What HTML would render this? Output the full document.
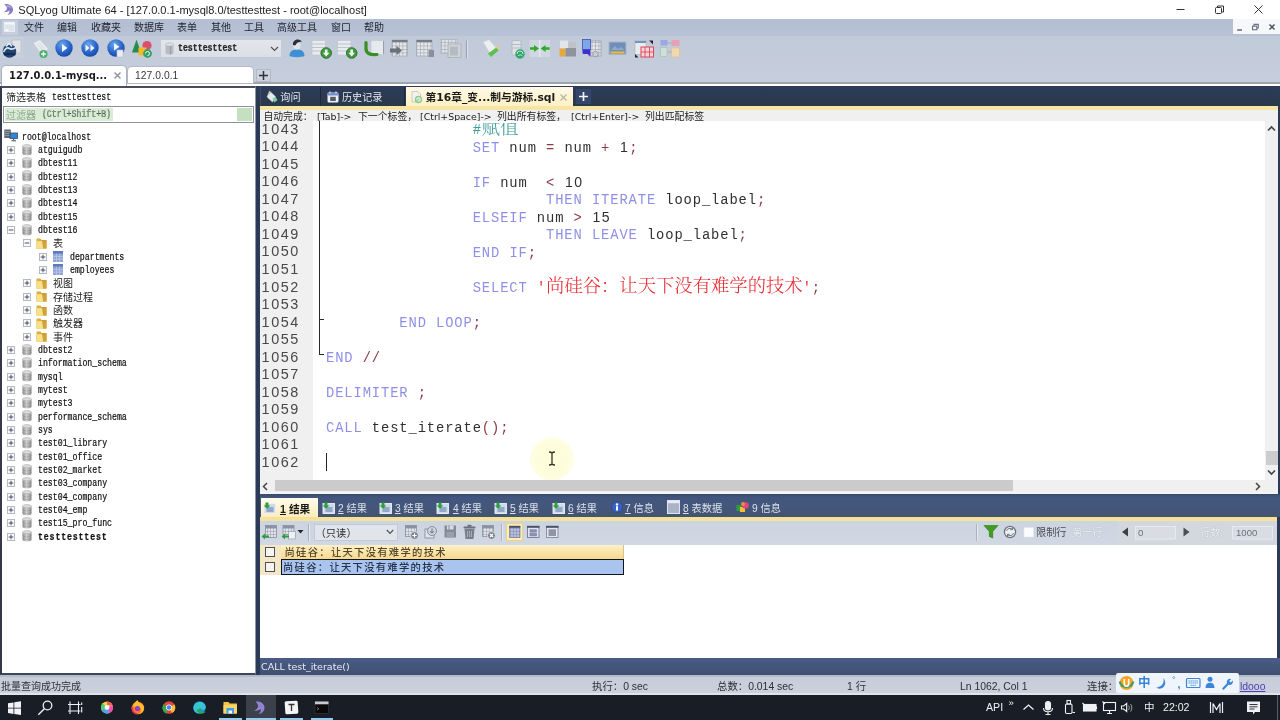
<!DOCTYPE html>
<html lang="zh-CN">
<head>
<meta charset="utf-8">
<title>SQLyog Ultimate 64 - [127.0.0.1-mysql8.0/testtesttest - root@localhost]</title>
<style>
*{box-sizing:border-box;margin:0;padding:0}
html,body{width:1280px;height:720px;overflow:hidden;background:#fff}
body{position:relative;will-change:transform;font-family:"Liberation Sans","Noto Sans CJK SC",sans-serif;font-size:10px;color:#1a1a1a}
.a{position:absolute}
.t{position:absolute;white-space:pre;line-height:1}
svg{position:absolute;overflow:visible}
/* window chrome */
#titlebar{left:0;top:0;width:1280px;height:20px;background:#fff}
#title{left:18.3px;top:2.6px;font-size:11.05px;color:#222;line-height:14px}
#menubar{left:0;top:19px;width:1280px;height:17px;background:linear-gradient(#b3bed2,#b7c2d5)}
.mi{top:22px;font-size:10px;line-height:12px;color:#1d222c}
#toolbar{left:0;top:36px;width:1280px;height:47px;background:linear-gradient(#c1cad9,#c6cedc)}
#tbline1{left:0;top:82px;width:1280px;height:2px;background:#9ea4ad}
#tbline2{left:0;top:84px;width:1280px;height:2px;background:#fff}
.ctab{background:#fff;border-radius:4px 4px 0 0}
.vd{font-family:"DejaVu Sans","Noto Sans CJK SC",sans-serif}
/* left panel */
#left{left:0;top:86px;width:256px;height:589px;background:#fff;border-left:2px solid #34394a;border-top:2px solid #4a4e57;border-bottom:2px solid #3f465a;border-right:1px solid #8e97a8}
.tr{position:absolute;white-space:pre;line-height:12px;height:12px;font-family:"Liberation Mono",monospace;font-size:10px;color:#111;-webkit-text-stroke:.22px #111;transform-origin:0 50%;transform:scaleX(.822)}
.tc{position:absolute;white-space:pre;line-height:12px;height:12px;font-family:"Noto Sans CJK SC",sans-serif;font-size:10px;color:#1c1c1c}
/* right panel */
#navy{left:256px;top:86px;width:1024px;height:589px;background:#2b3a57}
#edtabs{left:256px;top:86px;width:1024px;height:20px;background:linear-gradient(#2d3b5b,#2a3949)}
#hintline{left:260px;top:106px;width:1018px;height:4px;background:#f7e6a3}
#hint{left:260px;top:109px;width:1018px;height:12px;background:#f0f0f0}
#editor{left:260px;top:121px;width:1018px;height:359px;background:#fff}
#gutter{left:260px;top:121px;width:53px;height:359px;background:#f0f0f0}
.ln{position:absolute;left:261.6px;white-space:pre;font-family:"Liberation Sans",sans-serif;font-size:14.4px;letter-spacing:1.55px;line-height:18px;height:18px;color:#484848}
.cl{position:absolute;left:326px;white-space:pre;font-family:"Liberation Mono","Noto Serif CJK SC",monospace;font-size:13.8px;letter-spacing:.888px;line-height:18px;height:18px;color:#303030;tab-size:8;-moz-tab-size:8}
.cl b{font-weight:normal;color:#8f8fe8}
.cl i{font-style:normal;color:#8c3c44}
.cl em{font-style:normal;font-family:"Liberation Sans",sans-serif;font-size:14px;letter-spacing:1.38px;padding-left:.7px;line-height:0}
.cl u{text-decoration:none;color:#3f9c9c}
.cl s{text-decoration:none;color:#e8262c}
.cl .z{font-family:"Noto Serif CJK SC","Noto Sans CJK SC",serif;font-size:18.34px;font-weight:300;letter-spacing:0;line-height:0}
</style>
</head>
<body>
<div class="a" id="titlebar"></div>
<svg style="left:2px;top:3px" width="13" height="13" viewBox="0 0 13 13"><path d="M2.2 1.2 C6 0.6 10.6 2.2 11 6 C11.3 9 9 11.6 5.4 12 C7.2 10.6 7.8 9 7.4 7.6 C6 8.6 3.8 9.4 1.4 9.2 C3.4 8.2 4.8 6.8 5 5.2 C4.6 3.6 3.6 2.2 2.2 1.2 Z" fill="#8a78c8"/><path d="M4.4 2.2 C7 2.2 9.4 3.4 10 5.6 C8.6 4.4 6.6 3.8 5.2 4 Z" fill="#b9aee2"/></svg>
<div class="t" id="title">SQLyog Ultimate 64 - [127.0.0.1-mysql8.0/testtesttest - root@localhost]</div>
<svg style="left:1170px;top:0" width="110" height="20" viewBox="0 0 110 20"><g stroke="#333" stroke-width="1" fill="none"><path d="M6.5 9.5h8"/><rect x="45.500" y="7.500" width="6" height="6" rx="1"/><path d="M47.5 7.500v-1.500h6v6h-1.500"/><path d="M84.500 5.500l8 8M92.500 5.500l-8 8"/></g></svg>
<div class="a" id="menubar"></div>
<svg style="left:2px;top:20px" width="16" height="15" viewBox="0 0 16 15"><rect x="0" y="0" width="16" height="15" fill="#c6cddb"/><rect x="2.500" y="2.500" width="10" height="9" fill="#dfe4ec" stroke="#e9edf3"/><path d="M2.500 3.500h10" stroke="#f4f6fa" stroke-width="2"/><rect x="3.500" y="9" width="3" height="2" fill="#f7f8fb"/></svg>
<div class="t mi" style="left:24px">文件</div>
<div class="t mi" style="left:57px">编辑</div>
<div class="t mi" style="left:91px">收藏夹</div>
<div class="t mi" style="left:134px">数据库</div>
<div class="t mi" style="left:177px">表单</div>
<div class="t mi" style="left:211px">其他</div>
<div class="t mi" style="left:244px">工具</div>
<div class="t mi" style="left:277px">高级工具</div>
<div class="t mi" style="left:331px">窗口</div>
<div class="t mi" style="left:364px">帮助</div>
<div class="a" style="left:1232.5px;top:19px;width:48px;height:14.5px;background:#f5f7fa"></div>
<svg style="left:1233px;top:19px" width="47" height="15" viewBox="0 0 47 15"><g stroke="#4a5160" stroke-width="1.300" fill="none"><path d="M4.200 11h4.800"/><rect x="19.500" y="7.200" width="4.300" height="3.500" stroke="#6a7080" stroke-width="1.100"/><path d="M21 7.200v-1.800h4.300v3.600h-1.500" stroke="#6a7080" stroke-width="1.100"/><path d="M36.500 5.500l5 5M41.500 5.500l-5 5" stroke-width="1.500"/></g></svg>
<div class="a" id="toolbar"></div>
<div class="a" id="tbline1"></div><div class="a" id="tbline2"></div>
<svg style="left:0;top:36px" width="700" height="28" viewBox="0 36 700 28"><defs><radialGradient id="bl" cx=".4" cy=".3" r=".8"><stop offset="0" stop-color="#6aa8ec"/><stop offset=".55" stop-color="#2a66cc"/><stop offset="1" stop-color="#183f9c"/></radialGradient><linearGradient id="gr" x1="0" x2="0" y1="0" y2="1"><stop offset="0" stop-color="#7ed07e"/><stop offset="1" stop-color="#2f9a3a"/></linearGradient><pattern id="gd" width="3.500" height="3.500" patternUnits="userSpaceOnUse"><rect width="3.500" height="3.500" fill="#e4e7ea"/><path d="M0 0h3.500M0 0v3.500" stroke="#8c939c" stroke-width=".9"/></pattern></defs><rect x="0" y="37" width="23" height="21" fill="#ccd3de" opacity=".6"/><rect x="12" y="40" width="9" height="13" rx="1" fill="#dfe3ea" stroke="#b4bac6" stroke-width=".7"/><circle cx="9.500" cy="51" r="6.800" fill="#24426e"/><path d="M3.500 52c2-4 4-5 6-3.500c2 1.500 4 .5 6.500-1" stroke="#d6e7f6" stroke-width="1.600" fill="none"/><path d="M4 54.500c3-1 7-1 11.500 0" stroke="#0f2d54" stroke-width="2" fill="none"/><path d="M6 46.500l3-3l3 3" stroke="#e9f1fa" stroke-width="1.400" fill="none"/><path d="M33 43l7-3.500l8.500 9.500l-6.500 6z" fill="#e9ecef" stroke="#c1c7cf" stroke-width=".7"/><path d="M37.500 44.500l5 5.500M39.500 43.500l5 5.500" stroke="#c9ced6" stroke-width=".7"/><circle cx="43.500" cy="54" r="4" fill="#4bab6c"/><path d="M43.500 51.600v4.800M41.100 54h4.800" stroke="#f2faf4" stroke-width="1.400"/><circle cx="64" cy="48" r="8.700" fill="url(#bl)"/><path d="M62 44l5.500 4l-5.500 4z" fill="#f4f8fd"/><circle cx="90" cy="48" r="8.700" fill="url(#bl)"/><path d="M85.500 44.500l4 3.500l-4 3.500zM90.500 44.500l4 3.500l-4 3.500z" fill="#f4f8fd"/><circle cx="116" cy="48" r="8.700" fill="url(#bl)"/><path d="M114 43l5.500 3.800l-5.500 3.800z" fill="#f4f8fd"/><rect x="117" y="50" width="6" height="7" fill="#e9edf2" stroke="#b8c0cc" stroke-width=".6"/><path d="M136.500 39.500l4.500 13h-9z" fill="#248f4a"/><circle cx="147" cy="45.500" r="4.600" fill="#d9506e"/><rect x="138.500" y="47.500" width="8" height="8" fill="#f4b926"/><circle cx="147.500" cy="53.500" r="4.400" fill="#38a06a"/><path d="M145.500 53.500a2 2 0 1 1 2 2" stroke="#e9f6ec" stroke-width="1" fill="none"/><path d="M289.500 56c0-4.500 3-6.500 7.500-6.500s7.500 2 7.500 6.500c-2 1.500-13 1.500-15 0z" fill="#3f8fd4"/><circle cx="297" cy="45.800" r="3.600" fill="#dfe2e8"/><path d="M293 45c-.5-3.500 2-5.800 5-5.600c2 .1 3.300 1 3.800 2.500c-2.500-.4-5 .6-6.500 3.600z" fill="#2a2f3a"/><rect x="312" y="40.500" width="13.500" height="14.500" fill="#e9ecef" stroke="#bfc5cd" stroke-width=".7"/><path d="M312 44h13.500M312 47.500h13.500M312 51h13.500" stroke="#b4bac3" stroke-width=".8"/><circle cx="326.2" cy="53" r="5.300" fill="#3f9a3f" stroke="#2a6e2a" stroke-width=".9"/><path d="M324.9 49.500h2.600v3.300h2l-3.300 3.600l-3.300-3.600h2z" fill="#f2f8f2"/><rect x="337.5" y="40.500" width="13.500" height="14.500" fill="#e9ecef" stroke="#bfc5cd" stroke-width=".7"/><path d="M337.5 44h13.500M337.5 47.500h13.500M337.5 51h13.500" stroke="#b4bac3" stroke-width=".8"/><circle cx="351.7" cy="53" r="5.300" fill="#3f9a3f" stroke="#2a6e2a" stroke-width=".9"/><path d="M350.4 49.500h2.600v3.300h2l-3.300 3.600l-3.300-3.600h2z" fill="#f2f8f2"/><rect x="371" y="40.500" width="13" height="14" fill="#e6e9ed" stroke="#c3c8cf" stroke-width=".7"/><path d="M366 42.500v6c0 4.500 3.500 6.800 11 6" stroke="#3a8f22" stroke-width="3.200" fill="none" stroke-linecap="round"/><path d="M383.500 41v13" stroke="#9aa0a8" stroke-width="1"/><rect x="392" y="40" width="15.500" height="16" fill="url(#gd)" stroke="#9aa0a8" stroke-width=".6"/><rect x="392" y="40" width="15.500" height="2" fill="#777d86"/><path d="M390 48.500h6.500v-2.800l5.500 4.800l-5.500 4.800v-2.800h-6.500z" fill="#6a7079"/><rect x="416.500" y="40" width="15.500" height="16" fill="url(#gd)" stroke="#9aa0a8" stroke-width=".6"/><rect x="416.500" y="40" width="15.500" height="2" fill="#777d86"/><rect x="428.500" y="50" width="5.500" height="7" fill="#8a9099"/><rect x="441" y="39.500" width="16" height="14" fill="url(#gd)" stroke="#a2a8b0" stroke-width=".6" opacity=".8"/><rect x="448" y="44" width="13" height="13.500" fill="#cfd3d8" stroke="#a3a9b1" stroke-width=".7"/><rect x="450" y="46.500" width="8" height="9" fill="#b6bbc2"/><path d="M466.500 40.500v18" stroke="#9aa3b3" stroke-width="1.200"/><path d="M467.500 40.500v18" stroke="#e4e8ef" stroke-width=".8"/><path d="M483 42l6-2.500l7 8l-6 6z" fill="#eceff1" stroke="#c8cdd4" stroke-width=".7"/><path d="M488 53.500l8.500-6l2 3l-7.500 6.500z" fill="#5fc04a"/><path d="M495 47.500l2.500-1l1.500 3z" fill="#f0d23a"/><rect x="512" y="40.500" width="9" height="14.500" rx="1.500" fill="#dfe3e7" stroke="#a9afb8" stroke-width=".7"/><path d="M512 44.500h9M512 48h9" stroke="#a9afb8" stroke-width=".8"/><circle cx="520" cy="54" r="4.700" fill="#2fa56a"/><path d="M517 54a3 3 0 0 1 6 0M518 56c1.500-1.500 3-1.500 4.500 0" stroke="#d8f1e3" stroke-width=".9" fill="none"/><rect x="529.500" y="40" width="20.500" height="17" fill="#d6dbe4" opacity=".7"/><path d="M539 48.500l-5-3.500v2.200h-4v2.600h4v2.200zM540.600 48.500l5-3.500v2.200h4v2.600h-4v2.200z" fill="#2faa2a"/><path d="M539.800 40v17" stroke="#eef1f5" stroke-width="1"/><rect x="560" y="40.500" width="8" height="8" fill="#e3e5e8"/><rect x="568.500" y="42" width="7.500" height="7" fill="#bfc3c9"/><rect x="559.500" y="48.500" width="6" height="8" fill="#e7a93a"/><rect x="565.500" y="48" width="10.500" height="8.500" fill="#8f949c"/><rect x="589" y="41" width="12" height="15" fill="url(#gd)" stroke="#8a9099" stroke-width=".6"/><rect x="582.500" y="39.500" width="8" height="10" fill="#7fa6e6" stroke="#3a55b8" stroke-width=".8"/><path d="M582.500 49.500h8v7l-3-2.500h-3.500c-1 0-1.500-.5-1.500-1.500z" fill="#3f2fd0"/><circle cx="595.500" cy="54" r="2.800" fill="#c9cdd3" stroke="#7d838c" stroke-width=".6"/><rect x="609" y="42" width="17" height="12.500" fill="#6f8fb8" stroke="#a9b6c9" stroke-width="1"/><path d="M610.500 52.500h14" stroke="#e8bb3a" stroke-width="2.200"/><path d="M611 50l4-4l3 3l3-2l3.500 3z" fill="#90a9cc"/><rect x="635" y="40.500" width="11" height="14" fill="#e9ecef" stroke="#aab1ba" stroke-width=".6"/><path d="M635 42h11" stroke="#6f93c8" stroke-width="2"/><rect x="641" y="47" width="12.500" height="10" fill="#f6d3d8" stroke="#e0455a" stroke-width="1"/><path d="M645 47v10M649.500 47v10M641 52h12.500" stroke="#e0455a" stroke-width=".9"/><path d="M649 40.500l4 0l0 4z" fill="#23272e"/><path d="M635 54l0 3.500l3.500 0z" fill="#23272e"/><rect x="660.500" y="40" width="7" height="5.500" fill="#9aa8e6"/><rect x="671.500" y="40" width="8" height="6" fill="#e8a0b6"/><rect x="660.500" y="47.500" width="6.500" height="9" fill="#cfe0d6" stroke="#9fbfae" stroke-width=".6"/><rect x="671.500" y="48" width="8" height="9" fill="#f0d9b0" stroke="#e0bd86" stroke-width=".6"/><path d="M667.500 43h4M667.500 52h4" stroke="#9aa3b3" stroke-width=".8"/></svg><div class="a" style="left:160px;top:39px;width:122px;height:19px;background:linear-gradient(#e3e6ec,#dadfe6);border:1px solid #c5cbd6;border-radius:1px"></div><svg style="left:165px;top:42px" width="9" height="13" viewBox="0 0 9 13"><path d="M0.500 2.500v8.500c0 .800 1.500 1.500 4 1.500s4-.7 4-1.500v-8.500z" fill="#b9bcc0"/><ellipse cx="4.500" cy="2.500" rx="4" ry="1.700" fill="#dcdedf" stroke="#a9acb0" stroke-width=".5"/><path d="M5.500 4v8.500" stroke="#8e9196" stroke-width="1.500" opacity=".6"/></svg><div class="tr" style="left:178px;top:42.500px;font-weight:bold;color:#2a2a2a">testtesttest</div><svg style="left:270px;top:46px" width="9" height="6" viewBox="0 0 9 6"><path d="M1 1l3.500 3.500l3.500-3.500" stroke="#4d525c" stroke-width="1.200" fill="none"/></svg>

<div class="a ctab" style="left:2px;top:66px;width:124px;height:20px;box-shadow:0 0 0 1px #aab1bd"></div>
<div class="t vd" style="left:9px;top:69px;font-size:9.95px;font-weight:bold;line-height:13px;color:#1c1c1c">127.0.0.1-mysq...</div>
<svg style="left:113px;top:71px" width="9" height="9" viewBox="0 0 9 9"><path d="M1.500 1.500l6 6M7.500 1.500l-6 6" stroke="#8a8f99" stroke-width="1.300" fill="none"/></svg>
<div class="a ctab" style="left:128px;top:67px;width:125px;height:16px;box-shadow:0 0 0 1px #b4bac5"></div>
<div class="t" style="left:135px;top:69px;font-size:10.3px;letter-spacing:.05px;line-height:13px;color:#3a3a3a">127.0.0.1</div>
<div class="a" style="left:256px;top:69px;width:15px;height:13px;background:#cdd3de;border:1px solid #b3bac6"></div>
<svg style="left:258px;top:70px" width="11" height="11" viewBox="0 0 11 11"><path d="M5.500 1v9M1 5.500h9" stroke="#2f333b" stroke-width="1.500" fill="none"/></svg>
<div class="a" id="left"></div>
<div class="tc" style="left:6px;top:91px;color:#222">筛选表格</div>
<div class="tr" style="left:52px;top:92.2px">testtesttest</div>
<div class="a" style="left:3px;top:106px;width:251px;height:17px;background:#fff;border:1px solid #8e9298"></div>
<div class="a" style="left:5px;top:108px;width:108px;height:13px;background:#d9ecd6"></div>
<div class="a" style="left:237px;top:108px;width:15px;height:13px;background:#c5e0c1"></div>
<div class="tc" style="left:6px;top:108.5px;color:#8fa891">过滤器</div>
<div class="tr" style="left:37px;top:109px;color:#8fa891"> (Ctrl+Shift+B)</div>
<svg width="0" height="0" style="left:0;top:0"><defs><linearGradient id="dbg" x1="0" x2="1" y1="0" y2="0"><stop offset="0" stop-color="#8e8e8e"/><stop offset=".45" stop-color="#d2d2d2"/><stop offset="1" stop-color="#8a8a8a"/></linearGradient></defs></svg><svg style="left:4px;top:129.3px" width="14" height="13" viewBox="0 0 14 13"><rect x="0.300" y="0.500" width="6.500" height="8.500" fill="#5d6674"/><path d="M1 2.500h5M1 4.500h5M1 6.500h5" stroke="#9aa3b0" stroke-width=".8"/><rect x="6" y="4" width="7.500" height="5.500" fill="#2e86d8" stroke="#3a4656" stroke-width=".8"/><path d="M9.700 9.500v1.700M7.500 11.800h4.500" stroke="#3a4656" stroke-width="1"/></svg><div class="tr" style="left:21.5px;top:131.6px">root@localhost</div>
<svg style="left:7.3px;top:145.8px" width="8" height="8" viewBox="0 0 8 8"><rect x="0.500" y="0.500" width="7" height="7" fill="#fafafc" stroke="#b4b8c4" stroke-width="1"/><path d="M1.700 4h4.600M4 1.700v4.600" stroke="#3a404e" stroke-width=".9" fill="none"/></svg><svg style="left:22.2px;top:143.6px" width="10" height="12" viewBox="0 0 10 12"><path d="M0.500 2.200v7.600c0 1 2 1.700 4.500 1.700s4.500-.7 4.500-1.700v-7.600z" fill="url(#dbg)"/><ellipse cx="5" cy="2.200" rx="4.500" ry="1.700" fill="#d9d9d9" stroke="#a2a2a2" stroke-width=".5"/><path d="M0.500 5.200c0 1 2 1.600 4.500 1.600s4.500-.6 4.500-1.600M0.500 7.800c0 1 2 1.600 4.500 1.600s4.500-.6 4.500-1.600" stroke="#7f7f7f" stroke-width=".5" fill="none" opacity=".7"/></svg><div class="tr" style="left:38px;top:144.9px">atguigudb</div>
<svg style="left:7.3px;top:159.2px" width="8" height="8" viewBox="0 0 8 8"><rect x="0.500" y="0.500" width="7" height="7" fill="#fafafc" stroke="#b4b8c4" stroke-width="1"/><path d="M1.700 4h4.600M4 1.700v4.600" stroke="#3a404e" stroke-width=".9" fill="none"/></svg><svg style="left:22.2px;top:157.0px" width="10" height="12" viewBox="0 0 10 12"><path d="M0.500 2.200v7.600c0 1 2 1.700 4.500 1.700s4.500-.7 4.500-1.700v-7.600z" fill="url(#dbg)"/><ellipse cx="5" cy="2.200" rx="4.500" ry="1.700" fill="#d9d9d9" stroke="#a2a2a2" stroke-width=".5"/><path d="M0.500 5.200c0 1 2 1.600 4.500 1.600s4.500-.6 4.500-1.600M0.500 7.800c0 1 2 1.600 4.500 1.600s4.500-.6 4.500-1.600" stroke="#7f7f7f" stroke-width=".5" fill="none" opacity=".7"/></svg><div class="tr" style="left:38px;top:158.3px">dbtest11</div>
<svg style="left:7.3px;top:172.5px" width="8" height="8" viewBox="0 0 8 8"><rect x="0.500" y="0.500" width="7" height="7" fill="#fafafc" stroke="#b4b8c4" stroke-width="1"/><path d="M1.700 4h4.600M4 1.700v4.600" stroke="#3a404e" stroke-width=".9" fill="none"/></svg><svg style="left:22.2px;top:170.3px" width="10" height="12" viewBox="0 0 10 12"><path d="M0.500 2.200v7.600c0 1 2 1.700 4.500 1.700s4.500-.7 4.500-1.700v-7.600z" fill="url(#dbg)"/><ellipse cx="5" cy="2.200" rx="4.500" ry="1.700" fill="#d9d9d9" stroke="#a2a2a2" stroke-width=".5"/><path d="M0.500 5.200c0 1 2 1.600 4.500 1.600s4.500-.6 4.500-1.600M0.500 7.800c0 1 2 1.600 4.500 1.600s4.500-.6 4.500-1.600" stroke="#7f7f7f" stroke-width=".5" fill="none" opacity=".7"/></svg><div class="tr" style="left:38px;top:171.6px">dbtest12</div>
<svg style="left:7.3px;top:185.8px" width="8" height="8" viewBox="0 0 8 8"><rect x="0.500" y="0.500" width="7" height="7" fill="#fafafc" stroke="#b4b8c4" stroke-width="1"/><path d="M1.700 4h4.600M4 1.700v4.600" stroke="#3a404e" stroke-width=".9" fill="none"/></svg><svg style="left:22.2px;top:183.6px" width="10" height="12" viewBox="0 0 10 12"><path d="M0.500 2.200v7.600c0 1 2 1.700 4.500 1.700s4.500-.7 4.500-1.700v-7.600z" fill="url(#dbg)"/><ellipse cx="5" cy="2.200" rx="4.500" ry="1.700" fill="#d9d9d9" stroke="#a2a2a2" stroke-width=".5"/><path d="M0.500 5.200c0 1 2 1.600 4.500 1.600s4.500-.6 4.500-1.600M0.500 7.800c0 1 2 1.600 4.500 1.600s4.500-.6 4.500-1.600" stroke="#7f7f7f" stroke-width=".5" fill="none" opacity=".7"/></svg><div class="tr" style="left:38px;top:184.9px">dbtest13</div>
<svg style="left:7.3px;top:199.2px" width="8" height="8" viewBox="0 0 8 8"><rect x="0.500" y="0.500" width="7" height="7" fill="#fafafc" stroke="#b4b8c4" stroke-width="1"/><path d="M1.700 4h4.600M4 1.700v4.600" stroke="#3a404e" stroke-width=".9" fill="none"/></svg><svg style="left:22.2px;top:197.0px" width="10" height="12" viewBox="0 0 10 12"><path d="M0.500 2.200v7.600c0 1 2 1.700 4.500 1.700s4.500-.7 4.500-1.700v-7.600z" fill="url(#dbg)"/><ellipse cx="5" cy="2.200" rx="4.500" ry="1.700" fill="#d9d9d9" stroke="#a2a2a2" stroke-width=".5"/><path d="M0.500 5.200c0 1 2 1.600 4.500 1.600s4.500-.6 4.500-1.600M0.500 7.800c0 1 2 1.600 4.500 1.600s4.500-.6 4.500-1.600" stroke="#7f7f7f" stroke-width=".5" fill="none" opacity=".7"/></svg><div class="tr" style="left:38px;top:198.3px">dbtest14</div>
<svg style="left:7.3px;top:212.5px" width="8" height="8" viewBox="0 0 8 8"><rect x="0.500" y="0.500" width="7" height="7" fill="#fafafc" stroke="#b4b8c4" stroke-width="1"/><path d="M1.700 4h4.600M4 1.700v4.600" stroke="#3a404e" stroke-width=".9" fill="none"/></svg><svg style="left:22.2px;top:210.3px" width="10" height="12" viewBox="0 0 10 12"><path d="M0.500 2.200v7.600c0 1 2 1.700 4.500 1.700s4.500-.7 4.500-1.700v-7.600z" fill="url(#dbg)"/><ellipse cx="5" cy="2.200" rx="4.500" ry="1.700" fill="#d9d9d9" stroke="#a2a2a2" stroke-width=".5"/><path d="M0.500 5.200c0 1 2 1.600 4.500 1.600s4.500-.6 4.500-1.600M0.500 7.800c0 1 2 1.600 4.500 1.600s4.500-.6 4.500-1.600" stroke="#7f7f7f" stroke-width=".5" fill="none" opacity=".7"/></svg><div class="tr" style="left:38px;top:211.6px">dbtest15</div>
<svg style="left:7.3px;top:225.8px" width="8" height="8" viewBox="0 0 8 8"><rect x="0.500" y="0.500" width="7" height="7" fill="#fafafc" stroke="#b4b8c4" stroke-width="1"/><path d="M1.700 4h4.600" stroke="#3a404e" stroke-width=".9" fill="none"/></svg><svg style="left:22.2px;top:223.6px" width="10" height="12" viewBox="0 0 10 12"><path d="M0.500 2.200v7.600c0 1 2 1.700 4.500 1.700s4.500-.7 4.500-1.700v-7.600z" fill="url(#dbg)"/><ellipse cx="5" cy="2.200" rx="4.500" ry="1.700" fill="#d9d9d9" stroke="#a2a2a2" stroke-width=".5"/><path d="M0.500 5.200c0 1 2 1.600 4.500 1.600s4.500-.6 4.500-1.600M0.500 7.800c0 1 2 1.600 4.500 1.600s4.500-.6 4.500-1.600" stroke="#7f7f7f" stroke-width=".5" fill="none" opacity=".7"/></svg><div class="tr" style="left:38px;top:224.9px">dbtest16</div>
<svg style="left:23.3px;top:239.2px" width="8" height="8" viewBox="0 0 8 8"><rect x="0.500" y="0.500" width="7" height="7" fill="#fafafc" stroke="#b4b8c4" stroke-width="1"/><path d="M1.700 4h4.600" stroke="#3a404e" stroke-width=".9" fill="none"/></svg><svg style="left:36.0px;top:237.0px" width="11" height="12" viewBox="0 0 11 12"><path d="M0.500 1.500h4l1 1.500h5v8.500h-10z" fill="#dcae40"/><path d="M0.500 4.200h10v7.300h-10z" fill="#f0d06a"/><path d="M5.500 3h5v8.500h-3.500z" fill="#c9962f" opacity=".8"/><path d="M0.500 4.200h5.500l1 7.300h-6.500z" fill="#f7e08a"/></svg><div class="tc" style="left:53px;top:237.4px">表</div>
<svg style="left:39.3px;top:252.5px" width="8" height="8" viewBox="0 0 8 8"><rect x="0.500" y="0.500" width="7" height="7" fill="#fafafc" stroke="#b4b8c4" stroke-width="1"/><path d="M1.700 4h4.600M4 1.700v4.600" stroke="#3a404e" stroke-width=".9" fill="none"/></svg><svg style="left:53.0px;top:250.8px" width="10" height="11" viewBox="0 0 10 11"><rect x="0" y="0" width="10" height="11" fill="#8fa4d6"/><rect x="0" y="0" width="10" height="2.600" fill="#5f79be"/><path d="M0 5.400h10M0 8.200h10M3.400 2.600v8.400M6.700 2.600v8.400" stroke="#c3cfec" stroke-width=".7" fill="none"/></svg><div class="tr" style="left:69.5px;top:251.6px">departments</div>
<svg style="left:39.3px;top:265.8px" width="8" height="8" viewBox="0 0 8 8"><rect x="0.500" y="0.500" width="7" height="7" fill="#fafafc" stroke="#b4b8c4" stroke-width="1"/><path d="M1.700 4h4.600M4 1.700v4.600" stroke="#3a404e" stroke-width=".9" fill="none"/></svg><svg style="left:53.0px;top:264.1px" width="10" height="11" viewBox="0 0 10 11"><rect x="0" y="0" width="10" height="11" fill="#8fa4d6"/><rect x="0" y="0" width="10" height="2.600" fill="#5f79be"/><path d="M0 5.400h10M0 8.200h10M3.400 2.600v8.400M6.700 2.600v8.400" stroke="#c3cfec" stroke-width=".7" fill="none"/></svg><div class="tr" style="left:69.5px;top:264.9px">employees</div>
<svg style="left:23.3px;top:279.2px" width="8" height="8" viewBox="0 0 8 8"><rect x="0.500" y="0.500" width="7" height="7" fill="#fafafc" stroke="#b4b8c4" stroke-width="1"/><path d="M1.700 4h4.600M4 1.700v4.600" stroke="#3a404e" stroke-width=".9" fill="none"/></svg><svg style="left:36.0px;top:277.0px" width="11" height="12" viewBox="0 0 11 12"><path d="M0.500 1.500h4l1 1.500h5v8.500h-10z" fill="#dcae40"/><path d="M0.500 4.200h10v7.300h-10z" fill="#f0d06a"/><path d="M5.500 3h5v8.500h-3.500z" fill="#c9962f" opacity=".8"/><path d="M0.500 4.200h5.500l1 7.300h-6.500z" fill="#f7e08a"/></svg><div class="tc" style="left:53px;top:277.4px">视图</div>
<svg style="left:23.3px;top:292.5px" width="8" height="8" viewBox="0 0 8 8"><rect x="0.500" y="0.500" width="7" height="7" fill="#fafafc" stroke="#b4b8c4" stroke-width="1"/><path d="M1.700 4h4.600M4 1.700v4.600" stroke="#3a404e" stroke-width=".9" fill="none"/></svg><svg style="left:36.0px;top:290.3px" width="11" height="12" viewBox="0 0 11 12"><path d="M0.500 1.500h4l1 1.500h5v8.500h-10z" fill="#dcae40"/><path d="M0.500 4.200h10v7.300h-10z" fill="#f0d06a"/><path d="M5.500 3h5v8.500h-3.500z" fill="#c9962f" opacity=".8"/><path d="M0.500 4.200h5.500l1 7.300h-6.500z" fill="#f7e08a"/></svg><div class="tc" style="left:53px;top:290.7px">存储过程</div>
<svg style="left:23.3px;top:305.8px" width="8" height="8" viewBox="0 0 8 8"><rect x="0.500" y="0.500" width="7" height="7" fill="#fafafc" stroke="#b4b8c4" stroke-width="1"/><path d="M1.700 4h4.600M4 1.700v4.600" stroke="#3a404e" stroke-width=".9" fill="none"/></svg><svg style="left:36.0px;top:303.6px" width="11" height="12" viewBox="0 0 11 12"><path d="M0.500 1.500h4l1 1.500h5v8.500h-10z" fill="#dcae40"/><path d="M0.500 4.200h10v7.300h-10z" fill="#f0d06a"/><path d="M5.500 3h5v8.500h-3.500z" fill="#c9962f" opacity=".8"/><path d="M0.500 4.200h5.500l1 7.300h-6.500z" fill="#f7e08a"/></svg><div class="tc" style="left:53px;top:304.0px">函数</div>
<svg style="left:23.3px;top:319.2px" width="8" height="8" viewBox="0 0 8 8"><rect x="0.500" y="0.500" width="7" height="7" fill="#fafafc" stroke="#b4b8c4" stroke-width="1"/><path d="M1.700 4h4.600M4 1.700v4.600" stroke="#3a404e" stroke-width=".9" fill="none"/></svg><svg style="left:36.0px;top:317.0px" width="11" height="12" viewBox="0 0 11 12"><path d="M0.500 1.500h4l1 1.500h5v8.500h-10z" fill="#dcae40"/><path d="M0.500 4.200h10v7.300h-10z" fill="#f0d06a"/><path d="M5.500 3h5v8.500h-3.500z" fill="#c9962f" opacity=".8"/><path d="M0.500 4.200h5.500l1 7.300h-6.500z" fill="#f7e08a"/></svg><div class="tc" style="left:53px;top:317.4px">触发器</div>
<svg style="left:23.3px;top:332.5px" width="8" height="8" viewBox="0 0 8 8"><rect x="0.500" y="0.500" width="7" height="7" fill="#fafafc" stroke="#b4b8c4" stroke-width="1"/><path d="M1.700 4h4.600M4 1.700v4.600" stroke="#3a404e" stroke-width=".9" fill="none"/></svg><svg style="left:36.0px;top:330.3px" width="11" height="12" viewBox="0 0 11 12"><path d="M0.500 1.500h4l1 1.500h5v8.500h-10z" fill="#dcae40"/><path d="M0.500 4.200h10v7.300h-10z" fill="#f0d06a"/><path d="M5.500 3h5v8.500h-3.500z" fill="#c9962f" opacity=".8"/><path d="M0.500 4.200h5.500l1 7.300h-6.500z" fill="#f7e08a"/></svg><div class="tc" style="left:53px;top:330.7px">事件</div>
<svg style="left:7.3px;top:345.8px" width="8" height="8" viewBox="0 0 8 8"><rect x="0.500" y="0.500" width="7" height="7" fill="#fafafc" stroke="#b4b8c4" stroke-width="1"/><path d="M1.700 4h4.600M4 1.700v4.600" stroke="#3a404e" stroke-width=".9" fill="none"/></svg><svg style="left:22.2px;top:343.6px" width="10" height="12" viewBox="0 0 10 12"><path d="M0.500 2.200v7.600c0 1 2 1.700 4.500 1.700s4.500-.7 4.500-1.700v-7.600z" fill="url(#dbg)"/><ellipse cx="5" cy="2.200" rx="4.500" ry="1.700" fill="#d9d9d9" stroke="#a2a2a2" stroke-width=".5"/><path d="M0.500 5.200c0 1 2 1.600 4.500 1.600s4.500-.6 4.500-1.600M0.500 7.800c0 1 2 1.600 4.500 1.600s4.500-.6 4.500-1.600" stroke="#7f7f7f" stroke-width=".5" fill="none" opacity=".7"/></svg><div class="tr" style="left:38px;top:344.9px">dbtest2</div>
<svg style="left:7.3px;top:359.2px" width="8" height="8" viewBox="0 0 8 8"><rect x="0.500" y="0.500" width="7" height="7" fill="#fafafc" stroke="#b4b8c4" stroke-width="1"/><path d="M1.700 4h4.600M4 1.700v4.600" stroke="#3a404e" stroke-width=".9" fill="none"/></svg><svg style="left:22.2px;top:357.0px" width="10" height="12" viewBox="0 0 10 12"><path d="M0.500 2.200v7.600c0 1 2 1.700 4.500 1.700s4.500-.7 4.500-1.700v-7.600z" fill="url(#dbg)"/><ellipse cx="5" cy="2.200" rx="4.500" ry="1.700" fill="#d9d9d9" stroke="#a2a2a2" stroke-width=".5"/><path d="M0.500 5.200c0 1 2 1.600 4.500 1.600s4.500-.6 4.500-1.600M0.500 7.800c0 1 2 1.600 4.500 1.600s4.500-.6 4.500-1.600" stroke="#7f7f7f" stroke-width=".5" fill="none" opacity=".7"/></svg><div class="tr" style="left:38px;top:358.3px">information_schema</div>
<svg style="left:7.3px;top:372.5px" width="8" height="8" viewBox="0 0 8 8"><rect x="0.500" y="0.500" width="7" height="7" fill="#fafafc" stroke="#b4b8c4" stroke-width="1"/><path d="M1.700 4h4.600M4 1.700v4.600" stroke="#3a404e" stroke-width=".9" fill="none"/></svg><svg style="left:22.2px;top:370.3px" width="10" height="12" viewBox="0 0 10 12"><path d="M0.500 2.200v7.600c0 1 2 1.700 4.500 1.700s4.500-.7 4.500-1.700v-7.600z" fill="url(#dbg)"/><ellipse cx="5" cy="2.200" rx="4.500" ry="1.700" fill="#d9d9d9" stroke="#a2a2a2" stroke-width=".5"/><path d="M0.500 5.200c0 1 2 1.600 4.500 1.600s4.500-.6 4.500-1.600M0.500 7.800c0 1 2 1.600 4.500 1.600s4.500-.6 4.500-1.600" stroke="#7f7f7f" stroke-width=".5" fill="none" opacity=".7"/></svg><div class="tr" style="left:38px;top:371.6px">mysql</div>
<svg style="left:7.3px;top:385.8px" width="8" height="8" viewBox="0 0 8 8"><rect x="0.500" y="0.500" width="7" height="7" fill="#fafafc" stroke="#b4b8c4" stroke-width="1"/><path d="M1.700 4h4.600M4 1.700v4.600" stroke="#3a404e" stroke-width=".9" fill="none"/></svg><svg style="left:22.2px;top:383.6px" width="10" height="12" viewBox="0 0 10 12"><path d="M0.500 2.200v7.600c0 1 2 1.700 4.500 1.700s4.500-.7 4.500-1.700v-7.600z" fill="url(#dbg)"/><ellipse cx="5" cy="2.200" rx="4.500" ry="1.700" fill="#d9d9d9" stroke="#a2a2a2" stroke-width=".5"/><path d="M0.500 5.200c0 1 2 1.600 4.500 1.600s4.500-.6 4.500-1.600M0.500 7.800c0 1 2 1.600 4.500 1.600s4.500-.6 4.500-1.600" stroke="#7f7f7f" stroke-width=".5" fill="none" opacity=".7"/></svg><div class="tr" style="left:38px;top:384.9px">mytest</div>
<svg style="left:7.3px;top:399.2px" width="8" height="8" viewBox="0 0 8 8"><rect x="0.500" y="0.500" width="7" height="7" fill="#fafafc" stroke="#b4b8c4" stroke-width="1"/><path d="M1.700 4h4.600M4 1.700v4.600" stroke="#3a404e" stroke-width=".9" fill="none"/></svg><svg style="left:22.2px;top:397.0px" width="10" height="12" viewBox="0 0 10 12"><path d="M0.500 2.200v7.600c0 1 2 1.700 4.500 1.700s4.500-.7 4.500-1.700v-7.600z" fill="url(#dbg)"/><ellipse cx="5" cy="2.200" rx="4.500" ry="1.700" fill="#d9d9d9" stroke="#a2a2a2" stroke-width=".5"/><path d="M0.500 5.200c0 1 2 1.600 4.500 1.600s4.500-.6 4.500-1.600M0.500 7.800c0 1 2 1.600 4.500 1.600s4.500-.6 4.500-1.600" stroke="#7f7f7f" stroke-width=".5" fill="none" opacity=".7"/></svg><div class="tr" style="left:38px;top:398.3px">mytest3</div>
<svg style="left:7.3px;top:412.5px" width="8" height="8" viewBox="0 0 8 8"><rect x="0.500" y="0.500" width="7" height="7" fill="#fafafc" stroke="#b4b8c4" stroke-width="1"/><path d="M1.700 4h4.600M4 1.700v4.600" stroke="#3a404e" stroke-width=".9" fill="none"/></svg><svg style="left:22.2px;top:410.3px" width="10" height="12" viewBox="0 0 10 12"><path d="M0.500 2.200v7.600c0 1 2 1.700 4.500 1.700s4.500-.7 4.500-1.700v-7.600z" fill="url(#dbg)"/><ellipse cx="5" cy="2.200" rx="4.500" ry="1.700" fill="#d9d9d9" stroke="#a2a2a2" stroke-width=".5"/><path d="M0.500 5.200c0 1 2 1.600 4.500 1.600s4.500-.6 4.500-1.600M0.500 7.800c0 1 2 1.600 4.500 1.600s4.500-.6 4.500-1.600" stroke="#7f7f7f" stroke-width=".5" fill="none" opacity=".7"/></svg><div class="tr" style="left:38px;top:411.6px">performance_schema</div>
<svg style="left:7.3px;top:425.8px" width="8" height="8" viewBox="0 0 8 8"><rect x="0.500" y="0.500" width="7" height="7" fill="#fafafc" stroke="#b4b8c4" stroke-width="1"/><path d="M1.700 4h4.600M4 1.700v4.600" stroke="#3a404e" stroke-width=".9" fill="none"/></svg><svg style="left:22.2px;top:423.6px" width="10" height="12" viewBox="0 0 10 12"><path d="M0.500 2.200v7.600c0 1 2 1.700 4.500 1.700s4.500-.7 4.500-1.700v-7.600z" fill="url(#dbg)"/><ellipse cx="5" cy="2.200" rx="4.500" ry="1.700" fill="#d9d9d9" stroke="#a2a2a2" stroke-width=".5"/><path d="M0.500 5.200c0 1 2 1.600 4.500 1.600s4.500-.6 4.500-1.600M0.500 7.800c0 1 2 1.600 4.500 1.600s4.500-.6 4.500-1.600" stroke="#7f7f7f" stroke-width=".5" fill="none" opacity=".7"/></svg><div class="tr" style="left:38px;top:424.9px">sys</div>
<svg style="left:7.3px;top:439.2px" width="8" height="8" viewBox="0 0 8 8"><rect x="0.500" y="0.500" width="7" height="7" fill="#fafafc" stroke="#b4b8c4" stroke-width="1"/><path d="M1.700 4h4.600M4 1.700v4.600" stroke="#3a404e" stroke-width=".9" fill="none"/></svg><svg style="left:22.2px;top:437.0px" width="10" height="12" viewBox="0 0 10 12"><path d="M0.500 2.200v7.600c0 1 2 1.700 4.500 1.700s4.500-.7 4.500-1.700v-7.600z" fill="url(#dbg)"/><ellipse cx="5" cy="2.200" rx="4.500" ry="1.700" fill="#d9d9d9" stroke="#a2a2a2" stroke-width=".5"/><path d="M0.500 5.200c0 1 2 1.600 4.500 1.600s4.500-.6 4.500-1.600M0.500 7.800c0 1 2 1.600 4.500 1.600s4.500-.6 4.500-1.600" stroke="#7f7f7f" stroke-width=".5" fill="none" opacity=".7"/></svg><div class="tr" style="left:38px;top:438.3px">test01_library</div>
<svg style="left:7.3px;top:452.5px" width="8" height="8" viewBox="0 0 8 8"><rect x="0.500" y="0.500" width="7" height="7" fill="#fafafc" stroke="#b4b8c4" stroke-width="1"/><path d="M1.700 4h4.600M4 1.700v4.600" stroke="#3a404e" stroke-width=".9" fill="none"/></svg><svg style="left:22.2px;top:450.3px" width="10" height="12" viewBox="0 0 10 12"><path d="M0.500 2.200v7.600c0 1 2 1.700 4.500 1.700s4.500-.7 4.500-1.700v-7.600z" fill="url(#dbg)"/><ellipse cx="5" cy="2.200" rx="4.500" ry="1.700" fill="#d9d9d9" stroke="#a2a2a2" stroke-width=".5"/><path d="M0.500 5.200c0 1 2 1.600 4.500 1.600s4.500-.6 4.500-1.600M0.500 7.800c0 1 2 1.600 4.500 1.600s4.500-.6 4.500-1.600" stroke="#7f7f7f" stroke-width=".5" fill="none" opacity=".7"/></svg><div class="tr" style="left:38px;top:451.6px">test01_office</div>
<svg style="left:7.3px;top:465.8px" width="8" height="8" viewBox="0 0 8 8"><rect x="0.500" y="0.500" width="7" height="7" fill="#fafafc" stroke="#b4b8c4" stroke-width="1"/><path d="M1.700 4h4.600M4 1.700v4.600" stroke="#3a404e" stroke-width=".9" fill="none"/></svg><svg style="left:22.2px;top:463.6px" width="10" height="12" viewBox="0 0 10 12"><path d="M0.500 2.200v7.600c0 1 2 1.700 4.500 1.700s4.500-.7 4.500-1.700v-7.600z" fill="url(#dbg)"/><ellipse cx="5" cy="2.200" rx="4.500" ry="1.700" fill="#d9d9d9" stroke="#a2a2a2" stroke-width=".5"/><path d="M0.500 5.200c0 1 2 1.600 4.500 1.600s4.500-.6 4.500-1.600M0.500 7.800c0 1 2 1.600 4.500 1.600s4.500-.6 4.500-1.600" stroke="#7f7f7f" stroke-width=".5" fill="none" opacity=".7"/></svg><div class="tr" style="left:38px;top:464.9px">test02_market</div>
<svg style="left:7.3px;top:479.2px" width="8" height="8" viewBox="0 0 8 8"><rect x="0.500" y="0.500" width="7" height="7" fill="#fafafc" stroke="#b4b8c4" stroke-width="1"/><path d="M1.700 4h4.600M4 1.700v4.600" stroke="#3a404e" stroke-width=".9" fill="none"/></svg><svg style="left:22.2px;top:477.0px" width="10" height="12" viewBox="0 0 10 12"><path d="M0.500 2.200v7.600c0 1 2 1.700 4.500 1.700s4.500-.7 4.500-1.700v-7.600z" fill="url(#dbg)"/><ellipse cx="5" cy="2.200" rx="4.500" ry="1.700" fill="#d9d9d9" stroke="#a2a2a2" stroke-width=".5"/><path d="M0.500 5.200c0 1 2 1.600 4.500 1.600s4.500-.6 4.500-1.600M0.500 7.800c0 1 2 1.600 4.500 1.600s4.500-.6 4.500-1.600" stroke="#7f7f7f" stroke-width=".5" fill="none" opacity=".7"/></svg><div class="tr" style="left:38px;top:478.3px">test03_company</div>
<svg style="left:7.3px;top:492.5px" width="8" height="8" viewBox="0 0 8 8"><rect x="0.500" y="0.500" width="7" height="7" fill="#fafafc" stroke="#b4b8c4" stroke-width="1"/><path d="M1.700 4h4.600M4 1.700v4.600" stroke="#3a404e" stroke-width=".9" fill="none"/></svg><svg style="left:22.2px;top:490.3px" width="10" height="12" viewBox="0 0 10 12"><path d="M0.500 2.200v7.600c0 1 2 1.700 4.500 1.700s4.500-.7 4.500-1.700v-7.600z" fill="url(#dbg)"/><ellipse cx="5" cy="2.200" rx="4.500" ry="1.700" fill="#d9d9d9" stroke="#a2a2a2" stroke-width=".5"/><path d="M0.500 5.200c0 1 2 1.600 4.500 1.600s4.500-.6 4.500-1.600M0.500 7.800c0 1 2 1.600 4.500 1.600s4.500-.6 4.500-1.600" stroke="#7f7f7f" stroke-width=".5" fill="none" opacity=".7"/></svg><div class="tr" style="left:38px;top:491.6px">test04_company</div>
<svg style="left:7.3px;top:505.8px" width="8" height="8" viewBox="0 0 8 8"><rect x="0.500" y="0.500" width="7" height="7" fill="#fafafc" stroke="#b4b8c4" stroke-width="1"/><path d="M1.700 4h4.600M4 1.700v4.600" stroke="#3a404e" stroke-width=".9" fill="none"/></svg><svg style="left:22.2px;top:503.6px" width="10" height="12" viewBox="0 0 10 12"><path d="M0.500 2.200v7.600c0 1 2 1.700 4.500 1.700s4.500-.7 4.500-1.700v-7.600z" fill="url(#dbg)"/><ellipse cx="5" cy="2.200" rx="4.500" ry="1.700" fill="#d9d9d9" stroke="#a2a2a2" stroke-width=".5"/><path d="M0.500 5.200c0 1 2 1.600 4.500 1.600s4.500-.6 4.500-1.600M0.500 7.800c0 1 2 1.600 4.500 1.600s4.500-.6 4.500-1.600" stroke="#7f7f7f" stroke-width=".5" fill="none" opacity=".7"/></svg><div class="tr" style="left:38px;top:504.9px">test04_emp</div>
<svg style="left:7.3px;top:519.2px" width="8" height="8" viewBox="0 0 8 8"><rect x="0.500" y="0.500" width="7" height="7" fill="#fafafc" stroke="#b4b8c4" stroke-width="1"/><path d="M1.700 4h4.600M4 1.700v4.600" stroke="#3a404e" stroke-width=".9" fill="none"/></svg><svg style="left:22.2px;top:517.0px" width="10" height="12" viewBox="0 0 10 12"><path d="M0.500 2.200v7.600c0 1 2 1.700 4.500 1.700s4.500-.7 4.500-1.700v-7.600z" fill="url(#dbg)"/><ellipse cx="5" cy="2.200" rx="4.500" ry="1.700" fill="#d9d9d9" stroke="#a2a2a2" stroke-width=".5"/><path d="M0.500 5.200c0 1 2 1.600 4.500 1.600s4.500-.6 4.500-1.600M0.500 7.800c0 1 2 1.600 4.500 1.600s4.500-.6 4.500-1.600" stroke="#7f7f7f" stroke-width=".5" fill="none" opacity=".7"/></svg><div class="tr" style="left:38px;top:518.3px">test15_pro_func</div>
<svg style="left:7.3px;top:532.5px" width="8" height="8" viewBox="0 0 8 8"><rect x="0.500" y="0.500" width="7" height="7" fill="#fafafc" stroke="#b4b8c4" stroke-width="1"/><path d="M1.700 4h4.600M4 1.700v4.600" stroke="#3a404e" stroke-width=".9" fill="none"/></svg><svg style="left:22.2px;top:530.3px" width="10" height="12" viewBox="0 0 10 12"><path d="M0.500 2.200v7.600c0 1 2 1.700 4.500 1.700s4.500-.7 4.500-1.700v-7.600z" fill="url(#dbg)"/><ellipse cx="5" cy="2.200" rx="4.500" ry="1.700" fill="#d9d9d9" stroke="#a2a2a2" stroke-width=".5"/><path d="M0.500 5.200c0 1 2 1.600 4.500 1.600s4.500-.6 4.500-1.600M0.500 7.800c0 1 2 1.600 4.500 1.600s4.500-.6 4.500-1.600" stroke="#7f7f7f" stroke-width=".5" fill="none" opacity=".7"/></svg><div class="tr" style="left:38px;top:531.6px;font-weight:bold;letter-spacing:1.05px">testtesttest</div>

<div class="a" id="navy"></div>
<div class="a" id="edtabs"></div>
<div class="a" style="left:260px;top:87px;width:1px;height:19px;background:#3d4c6c"></div><div class="a" style="left:320px;top:87px;width:1px;height:19px;background:#1d2738"></div><div class="a" style="left:404px;top:87px;width:1px;height:19px;background:#1d2738"></div><svg style="left:266px;top:90px" width="13" height="14" viewBox="0 0 13 14"><path d="M3.500 1l6 5.500l-3 5.500l-5.500-5z" fill="#e6ece9" stroke="#b7c4c0" stroke-width=".6"/><path d="M6.500 8.500l3.200 -1.500l1.800 3l-3.200 2.500z" fill="#7fd1a8"/><path d="M2.200 4.500l3-2.500" stroke="#9fb0ad" stroke-width=".8"/></svg><div class="t" style="left:280.3px;top:92.3px;font-size:10.1px;line-height:12px;color:#e4e8ef">询问</div><svg style="left:327px;top:91px" width="12" height="12" viewBox="0 0 12 12"><rect x="0.500" y="1.500" width="11" height="10" rx="1.500" fill="#eef1f6"/><rect x="0.500" y="1.500" width="11" height="3" rx="1" fill="#6f8fc8"/><rect x="3.200" y="5.800" width="5.600" height="4.200" fill="#565b66"/><path d="M3 0.500v2M9 0.500v2" stroke="#dfe5ef" stroke-width="1.200"/></svg><div class="t" style="left:342px;top:92.3px;font-size:10.1px;line-height:12px;color:#e4e8ef">历史记录</div><div class="a" style="left:406px;top:87px;width:167px;height:20px;background:linear-gradient(#fff9e6,#fcefc2)"></div><svg style="left:410px;top:90px" width="14" height="14" viewBox="0 0 14 14"><path d="M2 1.500h6l2.500 2.500v8h-8.500z" fill="#f2f2ee" stroke="#b9bdb4" stroke-width=".7"/><circle cx="8.500" cy="9.500" r="3.400" fill="#9fd6a3" stroke="#79b585" stroke-width=".6"/><path d="M6.800 9.500a1.700 1.700 0 1 1 1.700 1.700" stroke="#fff" stroke-width=".9" fill="none"/></svg><div class="t vd" style="left:425.5px;top:91px;font-size:10.75px;line-height:13px;font-weight:bold;color:#1b1b1b">第16章_变...制与游标.sql</div><svg style="left:559px;top:93px" width="9" height="9" viewBox="0 0 9 9"><path d="M1.500 1.500l6 6M7.500 1.500l-6 6" stroke="#b9b4a5" stroke-width="1.300" fill="none"/></svg><div class="a" style="left:576px;top:89px;width:15px;height:15px;background:#34466a"></div><svg style="left:578px;top:91px" width="11" height="11" viewBox="0 0 11 11"><path d="M5.500 1v9M1 5.500h9" stroke="#f2f4f8" stroke-width="1.700" fill="none"/></svg>

<div class="a" id="hint"></div><div class="a" id="hintline"></div>
<div class="a" id="hinttext"><span class="t" style="left:263.4px;top:109.5px;font-size:9.85px;line-height:13px;color:#222">自动完成：</span><span class="t vd" style="left:317px;top:109.5px;font-size:9.4px;line-height:13px;color:#222">[Tab]-&gt;</span><span class="t" style="left:358px;top:109.5px;font-size:9.85px;line-height:13px;color:#222">下一个标签，</span><span class="t vd" style="left:420px;top:109.5px;font-size:9.4px;line-height:13px;color:#222">[Ctrl+Space]-&gt;</span><span class="t" style="left:497px;top:109.5px;font-size:9.85px;line-height:13px;color:#222">列出所有标签，</span><span class="t vd" style="left:571px;top:109.5px;font-size:9.4px;line-height:13px;color:#222">[Ctrl+Enter]-&gt;</span><span class="t" style="left:645px;top:109.5px;font-size:9.85px;line-height:13px;color:#222">列出匹配标签</span></div>
<div class="a" id="editor"></div>
<div class="a" id="gutter"></div>
<div class="a" style="left:319px;top:121px;width:1px;height:234px;background:#2a2a2a"></div><div class="a" style="left:319px;top:319px;width:5px;height:1px;background:#2a2a2a"></div><div class="a" style="left:319px;top:354px;width:5px;height:1px;background:#2a2a2a"></div>
<div class="ln" style="top:119.80px">1043</div><div class="cl" style="top:122.30px;clip-path:inset(0.6px 0 -4px 0)">		<u>#<span class="z">赋值</span></u></div>
<div class="ln" style="top:137.33px">1044</div><div class="cl" style="top:139.83px">		<b>SET</b> num <i>=</i> num <i>+</i> <em>1</em><i>;</i></div>
<div class="ln" style="top:154.85px">1045</div>
<div class="ln" style="top:172.38px">1046</div><div class="cl" style="top:174.88px">		<b>IF</b> num  <i>&lt;</i> <em>10</em></div>
<div class="ln" style="top:189.90px">1047</div><div class="cl" style="top:192.40px">			<b>THEN</b> <b>ITERATE</b> loop_label<i>;</i></div>
<div class="ln" style="top:207.43px">1048</div><div class="cl" style="top:209.93px">		<b>ELSEIF</b> num <i>&gt;</i> <em>15</em></div>
<div class="ln" style="top:224.96px">1049</div><div class="cl" style="top:227.46px">			<b>THEN</b> <b>LEAVE</b> loop_label<i>;</i></div>
<div class="ln" style="top:242.48px">1050</div><div class="cl" style="top:244.98px">		<b>END</b> <b>IF</b><i>;</i></div>
<div class="ln" style="top:260.01px">1051</div>
<div class="ln" style="top:277.53px">1052</div><div class="cl" style="top:280.03px">		<b>SELECT</b> <s>'<span class="z">尚硅谷：让天下没有难学的技术</span>'</s><i>;</i></div>
<div class="ln" style="top:295.06px">1053</div>
<div class="ln" style="top:312.59px">1054</div><div class="cl" style="top:315.09px">	<b>END</b> <b>LOOP</b><i>;</i></div>
<div class="ln" style="top:330.11px">1055</div>
<div class="ln" style="top:347.64px">1056</div><div class="cl" style="top:350.14px"><b>END</b> <i>//</i></div>
<div class="ln" style="top:365.16px">1057</div>
<div class="ln" style="top:382.69px">1058</div><div class="cl" style="top:385.19px"><b>DELIMITER</b> <i>;</i></div>
<div class="ln" style="top:400.22px">1059</div>
<div class="ln" style="top:417.74px">1060</div><div class="cl" style="top:420.24px"><b>CALL</b> test_iterate<i>();</i></div>
<div class="ln" style="top:435.27px">1061</div>
<div class="ln" style="top:452.79px">1062</div>
<div class="a" style="left:325.5px;top:453px;width:1.3px;height:18px;background:#222"></div>
<div class="a" style="left:260px;top:121px;width:1005px;height:359px;overflow:hidden"><div class="a" style="left:270px;top:316px;width:44px;height:44px;border-radius:50%;background:radial-gradient(circle,#fdfdd9 0,#fdfddc 52%,rgba(253,253,225,.6) 76%,rgba(255,255,240,0) 100%)"></div></div><svg style="left:548px;top:451px" width="8" height="15" viewBox="0 0 8 15"><path d="M1 1c1.500 0 2.500.3 3 1c.5-.7 1.500-1 3-1M1 14c1.500 0 2.500-.3 3-1c.5.700 1.500 1 3 1M4 2v11" stroke="#3a3528" stroke-width="1.300" fill="none"/></svg>
<div class="a" style="left:1265px;top:121px;width:13px;height:359px;background:#f0f0f0"></div><svg style="left:1267px;top:125px" width="9" height="7" viewBox="0 0 9 7"><path d="M1 5.500l3.500-3.500l3.500 3.500" stroke="#444" stroke-width="1.600" fill="none"/></svg><svg style="left:1267px;top:468.5px" width="9" height="7" viewBox="0 0 9 7"><path d="M1 1.500l3.500 3.500l3.500-3.500" stroke="#444" stroke-width="1.600" fill="none"/></svg><div class="a" style="left:1265.5px;top:450.5px;width:12px;height:14px;background:#cdcdcd"></div><div class="a" style="left:260px;top:480px;width:1018px;height:12px;background:#f0f0f0"></div><div class="a" style="left:275px;top:480px;width:738px;height:11px;background:#cbcbcb"></div><svg style="left:262px;top:482px" width="7" height="9" viewBox="0 0 7 9"><path d="M5 1l-3.500 3.500l3.500 3.500" stroke="#444" stroke-width="1.500" fill="none"/></svg><svg style="left:1253.5px;top:481.5px" width="7" height="9" viewBox="0 0 7 9"><path d="M2 1l3.500 3.500l-3.500 3.500" stroke="#444" stroke-width="1.500" fill="none"/></svg>

<div class="a" style="left:260px;top:492px;width:1018px;height:2px;background:#f3f4f8"></div><div class="a" style="left:256px;top:494px;width:1024px;height:23px;background:linear-gradient(#3a4a6c 0,#42557d 14%,#44577b 60%,#42546f 100%)"></div><div class="a" style="left:256px;top:493px;width:4px;height:182px;background:#2b3a57"></div><div class="a" style="left:261px;top:498px;width:57px;height:20px;background:linear-gradient(#fffbea,#fbecba)"></div><div class="a" style="left:260px;top:516.500px;width:1017px;height:4px;background:linear-gradient(#f6df8e,#f3e3a8)"></div><svg style="left:263px;top:502px" width="13" height="12" viewBox="0 0 13 12"><rect x="1" y="1.500" width="11.500" height="10" fill="#cfdbe8" stroke="#eef2f7" stroke-width=".9"/><rect x="3.500" y="5" width="7" height="5" fill="#8fa9c6"/><path d="M2.500 0.500h3v3h1.800l-3.300 3.300l-3.300-3.300h1.800z" fill="#2f9e3c"/></svg><div class="t" style="left:280px;top:503.3px;font-size:10.7px;line-height:12px;font-weight:bold;color:#1a1a1a"><span style="text-decoration:underline">1</span> 结果</div><svg style="left:322px;top:502px" width="13" height="12" viewBox="0 0 13 12"><rect x="1" y="1.500" width="11.500" height="10" fill="#cfdbe8" stroke="#eef2f7" stroke-width=".9"/><rect x="3.500" y="5" width="7" height="5" fill="#8fa9c6"/><path d="M2.500 0.500h3v3h1.800l-3.300 3.300l-3.300-3.300h1.800z" fill="#2f9e3c"/></svg><div class="t" style="left:338px;top:503.3px;font-size:10.2px;line-height:12px;color:#dce1ea"><span style="text-decoration:underline">2</span> 结果</div><svg style="left:379px;top:502px" width="13" height="12" viewBox="0 0 13 12"><rect x="1" y="1.500" width="11.500" height="10" fill="#cfdbe8" stroke="#eef2f7" stroke-width=".9"/><rect x="3.500" y="5" width="7" height="5" fill="#8fa9c6"/><path d="M2.500 0.500h3v3h1.800l-3.300 3.300l-3.300-3.300h1.800z" fill="#2f9e3c"/></svg><div class="t" style="left:395px;top:503.3px;font-size:10.2px;line-height:12px;color:#dce1ea"><span style="text-decoration:underline">3</span> 结果</div><svg style="left:436px;top:502px" width="13" height="12" viewBox="0 0 13 12"><rect x="1" y="1.500" width="11.500" height="10" fill="#cfdbe8" stroke="#eef2f7" stroke-width=".9"/><rect x="3.500" y="5" width="7" height="5" fill="#8fa9c6"/><path d="M2.500 0.500h3v3h1.800l-3.300 3.300l-3.300-3.300h1.800z" fill="#2f9e3c"/></svg><div class="t" style="left:453px;top:503.3px;font-size:10.2px;line-height:12px;color:#dce1ea"><span style="text-decoration:underline">4</span> 结果</div><svg style="left:494px;top:502px" width="13" height="12" viewBox="0 0 13 12"><rect x="1" y="1.500" width="11.500" height="10" fill="#cfdbe8" stroke="#eef2f7" stroke-width=".9"/><rect x="3.500" y="5" width="7" height="5" fill="#8fa9c6"/><path d="M2.500 0.500h3v3h1.800l-3.300 3.300l-3.300-3.300h1.800z" fill="#2f9e3c"/></svg><div class="t" style="left:510px;top:503.3px;font-size:10.2px;line-height:12px;color:#dce1ea"><span style="text-decoration:underline">5</span> 结果</div><svg style="left:552px;top:502px" width="13" height="12" viewBox="0 0 13 12"><rect x="1" y="1.500" width="11.500" height="10" fill="#cfdbe8" stroke="#eef2f7" stroke-width=".9"/><rect x="3.500" y="5" width="7" height="5" fill="#8fa9c6"/><path d="M2.500 0.500h3v3h1.800l-3.300 3.300l-3.300-3.300h1.800z" fill="#2f9e3c"/></svg><div class="t" style="left:568px;top:503.3px;font-size:10.2px;line-height:12px;color:#dce1ea"><span style="text-decoration:underline">6</span> 结果</div><svg style="left:611px;top:501px" width="12" height="12" viewBox="0 0 12 12"><circle cx="6" cy="6" r="5.500" fill="#3860c4" stroke="#2a3f86" stroke-width=".6"/><circle cx="6" cy="3.400" r="1.200" fill="#fff"/><rect x="5" y="5.200" width="2" height="4.300" fill="#fff"/></svg><div class="t" style="left:625px;top:503.3px;font-size:10.2px;line-height:12px;color:#dce1ea"><span style="text-decoration:underline">7</span> 信息</div><svg style="left:667px;top:500px" width="13" height="14" viewBox="0 0 13 14"><rect x="0.500" y="0.500" width="12" height="13" fill="#aab4c8" stroke="#dfe4ee" stroke-width="1"/><rect x="1" y="1" width="11" height="2.200" fill="#e8ecf3"/></svg><div class="t" style="left:683px;top:503.3px;font-size:10.2px;line-height:12px;color:#dce1ea"><span style="text-decoration:underline">8</span> 表数据</div><svg style="left:736px;top:501px" width="14" height="12" viewBox="0 0 14 12"><rect x="0.500" y="4" width="5" height="6" fill="#2e9e38"/><rect x="4" y="6" width="5" height="5" fill="#f1c232"/><circle cx="9.500" cy="4.500" r="3.300" fill="#e0457b"/><circle cx="7" cy="3" r="2" fill="#f08a3c"/></svg><div class="t" style="left:752px;top:503.3px;font-size:10.2px;line-height:12px;color:#dce1ea"><span style="text-decoration:none">9</span> 信息</div>
<div class="a" style="left:260px;top:520.500px;width:1017px;height:24px;background:linear-gradient(#ccd4e0,#d1d8e3)"></div><div class="a" style="left:1118px;top:521px;width:159px;height:23px;background:#d3d8df"></div><svg style="left:260px;top:521px" width="1017" height="23" viewBox="260 521 1017 23"><defs><pattern id="g2" width="3" height="3" patternUnits="userSpaceOnUse"><rect width="3" height="3" fill="#dfe3ea"/><path d="M0 0h3M0 0v3" stroke="#7f8896" stroke-width=".8"/></pattern></defs><rect x="265.500" y="525.500" width="11" height="12" fill="url(#g2)" stroke="#7f8896" stroke-width=".7"/><rect x="265.500" y="525.500" width="11" height="2.500" fill="#8a93a3"/><path d="M261.500 536.500l3.500-3v2h4v2h-4v2z" fill="#2f9e3a"/><rect x="283" y="525.500" width="11" height="9" fill="url(#g2)" stroke="#7f8896" stroke-width=".7"/><rect x="283" y="525.500" width="11" height="2.500" fill="#8a93a3"/><rect x="288.500" y="531.500" width="7" height="7.500" fill="#eef1f5" stroke="#9aa2b0" stroke-width=".7"/><path d="M281.500 536.500l3.500-3v2h4v2h-4v2z" fill="#2f9e3a"/><path d="M297.500 530h6l-3 3.500z" fill="#22262e"/><path d="M308.500 524v17" stroke="#a9b1c0" stroke-width="1"/><path d="M309.500 524v17" stroke="#e6eaf0" stroke-width="1"/><rect x="405.500" y="525.500" width="11" height="11" fill="url(#g2)" stroke="#7f8896" stroke-width=".7"/><rect x="405.500" y="525.500" width="11" height="2.500" fill="#8a93a3"/><circle cx="414.500" cy="535.500" r="4" fill="#7d848f" stroke="#e9edf2" stroke-width=".8"/><path d="M414.500 533.300v4.400M412.300 535.500h4.400" stroke="#fff" stroke-width="1.100"/><rect x="425" y="529" width="9" height="9" fill="#dfe3ea" stroke="#7f8896" stroke-width=".8"/><circle cx="432" cy="531" r="4.500" fill="#d0d5dd" stroke="#7f8896" stroke-width=".9"/><path d="M432 528.500v4.500l-2-1.700M432 533l2-1.700" stroke="#6d7480" stroke-width="1" fill="none"/><rect x="444.500" y="525.500" width="11.500" height="12" fill="#858b95"/><rect x="447" y="525.500" width="6.500" height="4" fill="#d9dde3"/><path d="M449 525.500v4" stroke="#858b95" stroke-width="1"/><rect x="446.500" y="532" width="7.500" height="5.500" fill="#9ba1aa"/><path d="M464.500 529h10l-1 10h-8z" fill="#7a808a"/><rect x="463.500" y="526.500" width="12" height="2" rx=".8" fill="#6b717b"/><rect x="467.500" y="524.800" width="4" height="2" fill="#6b717b"/><path d="M467.500 531v6M469.500 531v6M471.500 531v6" stroke="#b9bec6" stroke-width=".7"/><rect x="482.500" y="525.500" width="11" height="11" fill="url(#g2)" stroke="#7f8896" stroke-width=".7"/><rect x="482.500" y="525.500" width="11" height="2.500" fill="#8a93a3"/><circle cx="491.500" cy="535.500" r="4" fill="#7d848f" stroke="#e9edf2" stroke-width=".8"/><path d="M490 534l3 3M493 534l-3 3" stroke="#fff" stroke-width="1.100"/><path d="M501.500 524v17" stroke="#a9b1c0" stroke-width="1"/><path d="M502.500 524v17" stroke="#e6eaf0" stroke-width="1"/><rect x="506.500" y="523.500" width="16" height="17" fill="#fbeeb8" stroke="#efd27a" stroke-width="1"/><rect x="509.500" y="526.500" width="10.500" height="11" fill="url(#g2)" stroke="#6f7896" stroke-width=".7"/><rect x="509.500" y="526.500" width="10.500" height="11" fill="#6a78c0" opacity=".35"/><rect x="509.200" y="525.800" width="11.100" height="2" fill="#4a5068"/><rect x="527.500" y="526.500" width="11.500" height="11" fill="#dfe3ee" stroke="#7a84a0" stroke-width="1"/><rect x="527" y="525.800" width="12.500" height="2" fill="#4a5068"/><rect x="530" y="529.800" width="6.500" height="2.300" fill="#8a94b8" stroke="#6f7896" stroke-width=".6"/><rect x="530" y="533.600" width="6.500" height="2.300" fill="#8a94b8" stroke="#6f7896" stroke-width=".6"/><rect x="546.500" y="526.500" width="11.500" height="11" fill="#e4e7ee" stroke="#8a91a5" stroke-width="1"/><rect x="546" y="525.800" width="12.500" height="2" fill="#4a5068"/><rect x="548.500" y="529.300" width="7.500" height="6.700" fill="#9096a6"/><path d="M976.500 524v17" stroke="#aab2c0" stroke-width="1"/><path d="M977.500 524v17" stroke="#e6eaf0" stroke-width="1"/><path d="M984 525.500h14l-5.300 6v6.500l-3.400-1.500v-5z" fill="#3f9e1f" stroke="#2d7a12" stroke-width=".6"/><circle cx="1010" cy="532" r="5.600" fill="#eef1f4" stroke="#6f757f" stroke-width="1.300"/><path d="M1006.500 531a3.500 3.500 0 0 1 6-1.500M1013.500 533a3.500 3.500 0 0 1-6 1.500M1012.500 527.500v2.200h-2.200M1007.500 536.500v-2.200h2.200" stroke="#6f757f" stroke-width="1" fill="none"/><rect x="1024" y="527.500" width="9.500" height="9.500" fill="#fbfcfd" stroke="#dfe4ea" stroke-width=".6"/><path d="M1128 527.500v9l-6-4.500z" fill="#3c4048"/><path d="M1183.500 527.500v9l6-4.500z" fill="#4a4e57"/><rect x="1135.500" y="526.500" width="40" height="12.500" fill="#d9dde3" stroke="#e6e9ee" stroke-width="1"/><rect x="1232.500" y="526.500" width="40" height="12.500" fill="#d9dde3" stroke="#e6e9ee" stroke-width="1"/></svg><div class="t" style="left:1036px;top:526px;font-size:10.2px;line-height:13px;color:#4a4d55">限制行</div><div class="t" style="left:1072px;top:526px;font-size:10.2px;line-height:13px;color:#f0f2f5;text-shadow:0 0 1px #8f96a3">第一行:</div><div class="t" style="left:1200px;top:526px;font-size:10.2px;line-height:13px;color:#f0f2f5;text-shadow:0 0 1px #8f96a3">行数:</div><div class="t" style="left:1138px;top:525.500px;font-size:9.6px;line-height:13px;color:#6b6f78">0</div><div class="t" style="left:1236px;top:525.500px;font-size:9.6px;line-height:13px;color:#6b6f78">1000</div><div class="a" style="left:314px;top:524px;width:84px;height:17px;background:#e0e4eb;border:1px solid #c3c9d4"></div><div class="t" style="left:315.5px;top:526.5px;font-size:10.3px;line-height:13px;color:#2b2b2b">（只读）</div><svg style="left:386px;top:529px" width="8" height="6" viewBox="0 0 8 6"><path d="M0.800 1l3.200 3.400l3.200-3.400" stroke="#555" stroke-width="1.200" fill="none"/></svg><div class="a" style="left:260px;top:544.500px;width:1017px;height:114px;background:#fff"></div><div class="a" style="left:260px;top:545px;width:21px;height:29.500px;background:#f4e7c8"></div><div class="a" style="left:281px;top:545px;width:343px;height:14px;background:linear-gradient(#fdf0c8,#f7d88e);border-right:1px solid #d8c48a"></div><div class="t" style="left:284.500px;top:545.500px;font-size:10.3px;font-weight:500;letter-spacing:1.3px;line-height:13px;color:#54462a">尚硅谷：让天下没有难学的技术</div><div class="a" style="left:280.500px;top:558.500px;width:343.500px;height:16px;background:#a9c5ef;border:1.500px solid #10141c"></div><div class="t" style="left:283px;top:560.500px;font-size:10.3px;font-weight:500;letter-spacing:1.3px;line-height:13px;color:#25324a">尚硅谷：让天下没有难学的技术</div><div class="a" style="left:264.800px;top:546.5px;width:10.300px;height:10.500px;background:#f4f4f2;border:1.600px solid #505050"></div><div class="a" style="left:264.800px;top:561.5px;width:10.300px;height:10.500px;background:#f4f4f2;border:1.600px solid #505050"></div>

<div class="a" style="left:260px;top:658px;width:1020px;height:17px;background:linear-gradient(#4a5b88,#3f506f)"></div><div class="t vd" style="left:261px;top:660.500px;font-size:9.5px;line-height:12px;color:#e8ebf2">CALL test_iterate()</div><div class="a" style="left:0;top:674.500px;width:1280px;height:2.500px;background:#b3bccb"></div><div class="a" style="left:0;top:676.500px;width:1280px;height:18.500px;background:linear-gradient(#c7ced9,#cbd1dc)"></div><div class="a" style="left:0;top:693px;width:1280px;height:1.500px;background:#dfe3ea"></div><div class="t" style="left:1px;top:680px;font-size:10px;line-height:13px;color:#2c2f36">批量查询成功完成</div><div class="t" style="left:592px;top:680px;font-size:10.4px;line-height:13px;color:#2c2f36">执行：0 sec</div><div class="t" style="left:717px;top:680px;font-size:10.4px;line-height:13px;color:#2c2f36">总数：0.014 sec</div><div class="t" style="left:847px;top:680px;font-size:10.4px;line-height:13px;color:#2c2f36">1 行</div><div class="t" style="left:960px;top:680px;font-size:10.4px;line-height:13px;color:#2c2f36">Ln 1062, Col 1</div><div class="t" style="left:1087px;top:680px;font-size:10.4px;line-height:13px;color:#2c2f36">连接：</div><div class="t" style="left:1240px;top:680px;font-size:10.4px;line-height:13px;color:#2c2f36;color:#4b3fb3;text-decoration:underline">ldooo</div><div class="a" style="left:1116px;top:673px;width:123px;height:19.500px;background:#f0f4fb;border-radius:2px"></div><svg style="left:1116px;top:673px" width="123" height="20" viewBox="0 0 123 20"><circle cx="10.500" cy="10" r="7" fill="#f4a423"/><path d="M3.700 8.500a7 7 0 0 0 13.600 0" fill="none" stroke="#3f9e6e" stroke-width="2.200"/><path d="M8.300 6v5a2.200 2.200 0 0 0 4.400 0v-5" fill="none" stroke="#fff" stroke-width="1.600"/><path d="M40 14.500c3.500 0 6.500-2.300 7.500-5.500c.300-1.500.200-2.500-.300-4c2.500 2.500 2.800 6.500.300 9c-2 2-5.300 2.200-7.500.500z" fill="#3a86d9"/><rect x="70.500" y="5.500" width="13.500" height="9" rx="1" fill="none" stroke="#3a86d9" stroke-width="1.200"/><path d="M72.500 8h9.500M72.500 10h9.500M74.500 12.300h5.500" stroke="#3a86d9" stroke-width="1" stroke-dasharray="1.300 0.700"/><circle cx="94" cy="6.300" r="2.500" fill="#3a86d9"/><path d="M89.500 15c0-3.500 1.500-5.200 4.500-5.200s4.500 1.700 4.500 5.200z" fill="#3a86d9"/><path d="M106 15.500l5-5.300a3.200 3.200 0 0 1 4.200-4.200l-2 2l1.500 1.500l2-2a3.200 3.200 0 0 1-4.200 4.200l-5 5.300z" fill="#3a86d9"/></svg><div class="t" style="left:1172px;top:674.500px;font-size:9px;line-height:10px;color:#3a86d9">°</div><div class="t" style="left:1177.500px;top:677.500px;font-size:11px;line-height:12px;font-weight:bold;color:#3a86d9">,</div><div class="t" style="left:1138px;top:676px;font-size:12.5px;line-height:14px;font-weight:bold;color:#3a86d9">中</div>

<div class="a" style="left:0;top:694.500px;width:1280px;height:26px;background:#191d25"></div><div class="a" style="left:246px;top:695px;width:30px;height:25px;background:#3b404a"></div><div class="a" style="left:219px;top:718px;width:23px;height:2px;background:#8fcdf0"></div><div class="a" style="left:246px;top:718px;width:30px;height:2px;background:#8fcdf0"></div><div class="a" style="left:280px;top:718px;width:23px;height:2px;background:#8fcdf0"></div><div class="a" style="left:311px;top:718px;width:22px;height:2px;background:#8fcdf0"></div><svg style="left:0;top:695px" width="340" height="25" viewBox="0 0 340 25"><path d="M8 8.200l5.500-.8v5.400h-5.500zM14.300 7.300l6.700-1v6.500h-6.700zM8 13.600h5.500v5.300l-5.500-.8zM14.300 13.600h6.700v6.400l-6.700-1z" fill="#f2f4f7"/><circle cx="47.500" cy="10.500" r="4.300" fill="none" stroke="#eef0f3" stroke-width="1.300"/><path d="M44.300 13.700l-6 6" stroke="#eef0f3" stroke-width="1.400"/><path d="M70 6.500v12.500M78.500 6.500v12.500M68 9.500h12.500M68 16h12.500M81.700 7.500v2.500M81.700 12v5.500" fill="none" stroke="#eef0f3" stroke-width="1.100"/><circle cx="107" cy="12.500" r="6" fill="#f4d03f"/><path d="M107 6.500a6 6 0 0 1 5.700 4h-5.700z" fill="#ef5a5a"/><path d="M112.700 10.500a6 6 0 0 1-3.700 7.700l-2-5.700z" fill="#e94fb5"/><path d="M109 18.200a6 6 0 0 1-7.500-3.500l5.500-2.200z" fill="#4aa3f0"/><path d="M101.500 14.700a6 6 0 0 1 1-6.500l4.500 4.300z" fill="#4ccf6a"/><circle cx="107" cy="12.500" r="2.400" fill="#fbfbfb"/><circle cx="138" cy="13" r="6.200" fill="#ff7a1a"/><path d="M133 10c1-2.500 3-3.500 4.500-5c.3 1.500 1.500 2.500 3.500 3.500c2 1.200 3 3 3 5a6 6 0 0 1-6 5.700c2.500-.7 3.500-2.500 3.300-4.200c-.5-2-2.500-2.600-3.800-2c-1.500.6-2.800.2-4.500-3z" fill="#ffbe2e"/><circle cx="137.500" cy="13.500" r="2.600" fill="#8a3fd0"/><path d="M132 12a6 6 0 0 0 5 7" stroke="#e8324f" stroke-width="1.500" fill="none"/><circle cx="169" cy="12.500" r="6.300" fill="#e8453c"/><path d="M169 12.500l-5.500-3.200a6.300 6.300 0 0 0 2.400 9.200z" fill="#34a853"/><path d="M169 12.500l3.100 5.500a6.300 6.300 0 0 0 3.200-5.500a6.300 6.300 0 0 0-.8-3.100z" fill="#fbc02d"/><circle cx="169" cy="12.500" r="2.900" fill="#fff"/><circle cx="169" cy="12.500" r="2.200" fill="#4285f4"/><circle cx="199.500" cy="12.500" r="6.300" fill="#1f8fd8"/><path d="M193.500 13.500c0-4 3-6.500 6.500-6.500c3 0 5.500 2 5.700 5.200c0 1.500-1 2.500-2.700 2.500c-1.500 0-2.500-.7-2.500-1.800c-2 .5-2.500 3.500.5 5.200c-4 .8-7.500-1.500-7.500-4.600z" fill="#37c6d0"/><path d="M196.500 14.500c.5 3 3 4.500 6 4c1.500-.3 2.500-1 3.200-2c-2 .8-5 .8-6.200-2.200z" fill="#2aa84f"/><path d="M223.500 7h5l1.200 1.500h7.300v10h-13.500z" fill="#f5c242"/><rect x="223.500" y="10" width="13.500" height="8.500" fill="#fad56a"/><rect x="226.500" y="13" width="7.500" height="5.500" fill="#3fa0e8"/><rect x="228.500" y="15.500" width="3.500" height="3" fill="#f5f5f5"/><path d="M255.500 6.500c4.500-.5 8.500 1.500 9 5.500c.3 3.500-2 6.500-6 7c2-1.700 2.600-3.500 2.200-5c-1.500 1.200-4 2-6.500 1.800c2.200-1.200 3.700-2.700 4-4.500c-.4-1.800-1.300-3.400-2.700-4.800z" fill="#9382d2"/><rect x="285" y="6" width="13" height="13" rx="1.500" fill="#f4f4f4" transform="rotate(-4 291.500 12.500)"/><path d="M288.500 9.500h6M291.500 9.500v6.500" stroke="#333" stroke-width="1.300"/><rect x="315" y="6.500" width="13.500" height="12" fill="#0a0a0a" stroke="#3a3d44" stroke-width=".6"/><rect x="315" y="6.500" width="13.500" height="2.800" fill="#c9c9c9"/><path d="M317 12.500l1.800 1.300l-1.800 1.300" stroke="#999" stroke-width=".7" fill="none"/></svg><div class="a" style="left:1276.5px;top:695px;width:1px;height:25px;background:#5a5f68"></div><div class="t" style="left:986px;top:701px;font-size:10.6px;line-height:13px;color:#f0f2f5">API</div><svg style="left:1005px;top:695px" width="275" height="25" viewBox="0 0 275 25"><g stroke="#eef0f3" fill="none" stroke-width="1.100"><path d="M18.500 14.500l5-4.500l5 4.500" stroke-width="1.300"/><rect x="40.500" y="6.500" width="5" height="8.500" rx="2.500" fill="#eef0f3"/><path d="M38.500 13c0 5 9 5 9 0M43 17v2.500M40.500 19.500h5"/><rect x="60.500" y="9" width="6.500" height="9.500" rx="1.200"/><rect x="62" y="5.500" width="3.500" height="3.500"/><path d="M67.500 17.500h2.500"/><rect x="78.500" y="9.500" width="12.500" height="6.500" fill="#eef0f3"/><path d="M91.500 11.500v2.500M77.500 8l2 2"/><rect x="98.500" y="7.500" width="12" height="8" /><path d="M102 18.500h5M104.500 15.500v3M97.500 6.500l2.500 2.500"/><path d="M116.500 11h2.200l3-2.600v8.200l-3-2.600h-2.200z"/><path d="M123.500 10.500c1 1 1 3.500 0 4.500M125.500 9c1.800 2 1.800 5.500 0 7.500" stroke-width=".9" opacity=".7"/><path d="M205.500 7v11M217.500 7v11M208 8.500l3.500 6l3.500-6M208 8.500v9.500M215 8.500v9.500" stroke-width="1.200"/><path d="M242 6.500h13v10.500h-5l-2 2.500v-2.500h-6z" fill="#eef0f3" stroke="none"/><path d="M244.500 9.500h8M244.500 11.800h8M244.500 14h5" stroke="#191d25" stroke-width=".9"/></g></svg><div class="t" style="left:1008.5px;top:696.5px;font-size:9.5px;line-height:11px;color:#f0f2f5">»</div><div class="t" style="left:1144px;top:701px;font-size:10.5px;line-height:13px;color:#f0f2f5">中</div><div class="t" style="left:1163px;top:701px;font-size:10.6px;line-height:13px;color:#f0f2f5">22:02</div>

</body>
</html>
